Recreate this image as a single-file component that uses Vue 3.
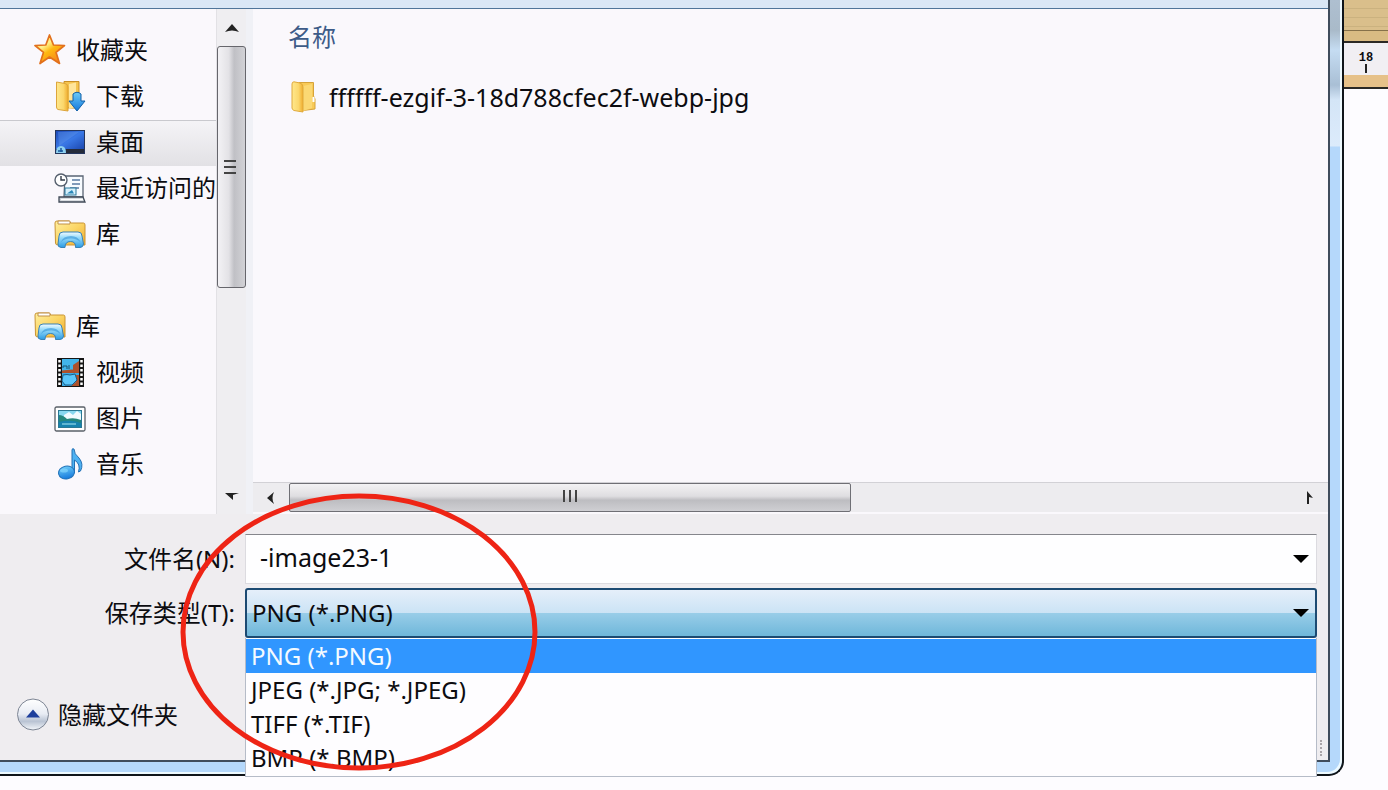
<script setup>
import { ref } from 'vue'

const navItems = [
  { id: 'fav', label: '收藏夹', icon: 'star', root: true },
  { id: 'down', label: '下载', icon: 'download' },
  { id: 'desk', label: '桌面', icon: 'desktop' },
  { id: 'recent', label: '最近访问的', icon: 'recent' },
  { id: 'favlib', label: '库', icon: 'library' },
  { id: 'gap', spacer: true },
  { id: 'lib', label: '库', icon: 'library', root: true },
  { id: 'video', label: '视频', icon: 'video' },
  { id: 'pic', label: '图片', icon: 'picture' },
  { id: 'music', label: '音乐', icon: 'music' },
]
const selected = ref('desk')
const fileName = ref('-image23-1')
const types = ['PNG (*.PNG)', 'JPEG (*.JPG; *.JPEG)', 'TIFF (*.TIF)', 'BMP (*.BMP)']
const fileType = ref(types[0])
</script>

<template>
  <div class="screen">
    <svg class="defs" width="0" height="0" aria-hidden="true">
      <defs>
        <linearGradient id="gStar" x1="0" y1="0" x2="0.7" y2="1"><stop offset="0" stop-color="#ffe030" /><stop offset="0.4" stop-color="#fff08a" /><stop offset="0.6" stop-color="#ffb810" /><stop offset="1" stop-color="#f5821c" /></linearGradient>
        <linearGradient id="gFolder" x1="0" y1="0" x2="1" y2="1"><stop offset="0" stop-color="#fff0a0" /><stop offset="0.5" stop-color="#fbd565" /><stop offset="1" stop-color="#eea92c" /></linearGradient>
        <linearGradient id="gSpine" x1="0" y1="0" x2="1" y2="0"><stop offset="0" stop-color="#ffe88c" /><stop offset="0.6" stop-color="#fbd76c" /><stop offset="1" stop-color="#f0ac2c" /></linearGradient>
        <linearGradient id="gBlue" x1="0" y1="0" x2="0" y2="1"><stop offset="0" stop-color="#6ccbf8" /><stop offset="1" stop-color="#1478dc" /></linearGradient>
        <linearGradient id="gDesk" x1="0" y1="0" x2="1" y2="1"><stop offset="0" stop-color="#1d4bb8" /><stop offset="0.5" stop-color="#3a78e6" /><stop offset="1" stop-color="#1c48b0" /></linearGradient>
        <linearGradient id="gStand" x1="0" y1="0" x2="0" y2="1"><stop offset="0" stop-color="#f2fbff" /><stop offset="0.35" stop-color="#9adcfa" /><stop offset="1" stop-color="#2a9be4" /></linearGradient>
        <linearGradient id="gOrb" x1="0" y1="0" x2="0" y2="1"><stop offset="0" stop-color="#ffffff" /><stop offset="0.48" stop-color="#e8ecf4" /><stop offset="0.72" stop-color="#b9c3d3" /><stop offset="1" stop-color="#f4f7fb" /></linearGradient>
      </defs>
    </svg>

    <main class="dialog">
      <div class="body">
        <div class="panes">
          <nav class="tree">
            <template v-for="item in navItems" :key="item.id">
              <div v-if="item.spacer" class="node"></div>
              <button v-else type="button" class="node" :class="{ root: item.root, active: selected === item.id }" @click="selected = item.id">
                <svg class="icon" viewBox="0 0 32 32" aria-hidden="true">
                  <path v-if="item.icon === 'star'" d="M15.500 1L19.500 11L30.500 11.500L22 18.300L25.500 29.500L15.500 23L6 29.500L9.500 18.300L1 11.500L11.800 11Z" fill="url(#gStar)" stroke="#e2701c" stroke-width="1.700" stroke-linejoin="round" />
                  <g v-else-if="item.icon === 'download'">
                    <path d="M10 1.500H25V28H10Z" fill="#f5c44f" stroke="#c98f26" />
                    <path d="M15 4L22 2.500V27L15 29Z" fill="#ffe59a" />
                    <path d="M2.500 2L11 3.500Q14 4 14 7V31L4 29.500Q2.500 29 2.500 27Z" fill="url(#gSpine)" stroke="#dda53b" />
                    <path d="M19 14Q23 10.500 27 14V21H31L23 31L15 21H19Z" fill="url(#gBlue)" stroke="#1261a8" />
                  </g>
                  <g v-else-if="item.icon === 'desktop'">
                    <rect x="1" y="4" width="30" height="24" fill="#24355c" />
                    <rect x="2" y="5" width="28" height="18" fill="url(#gDesk)" />
                    <path d="M4 6H25L5 20Z" fill="#6ba0f2" opacity="0.35" />
                    <rect x="12" y="23" width="18" height="4" fill="#242b3a" />
                    <path d="M2 27Q2 20 7 20Q12 20 12 27Z" fill="#8ed1f0" />
                    <path d="M4 25H9M7 22V26" stroke="#17569c" stroke-width="1.500" />
                  </g>
                  <g v-else-if="item.icon === 'recent'">
                    <path d="M11 4H29V25H10Z" fill="#f7fbff" stroke="#5a6474" stroke-width="1.300" />
                    <path d="M5 25H29L31 30H5Z" fill="#cdd2d8" stroke="#414b58" stroke-width="1.300" />
                    <path d="M7 27.500H29" stroke="#fff" stroke-width="1.500" />
                    <path d="M18 8H26M18 12H26M16 16H25" stroke="#5a7ba4" stroke-width="1.500" />
                    <rect x="11" y="16" width="11" height="7" fill="#d6f0fb" stroke="#2b789c" />
                    <path d="M13 21.500L18 18L20 21.500Z" fill="#2a87b8" />
                    <circle cx="7" cy="8" r="6" fill="#fff" stroke="#56606e" stroke-width="1.400" />
                    <path d="M7 4V8H11" fill="none" stroke="#333c49" stroke-width="1.400" />
                  </g>
                  <g v-else-if="item.icon === 'library'">
                    <path d="M1 5Q1 3 3 3H15L17 5H29.500Q31 5 31 7V27H4Q1.500 27 1.500 25Z" fill="url(#gFolder)" stroke="#c99434" />
                    <path d="M4 3H16V6H4Z" fill="#fff" stroke="#c09048" />
                    <path d="M5 18Q5 14 9 14H24Q28 14 28 18L29.500 26Q29 29.500 26 29.500H21.500Q22 23.500 16.500 23.500Q11 23.500 11 29.500H7Q3.500 29 4 26Z" fill="url(#gStand)" stroke="#3982b7" />
                    <path d="M7 24Q9 18 17 18Q24 18 26.500 24Q22 20 16.500 20.500Q10 20.500 7 24Z" fill="#1f86cf" opacity="0.5" />
                  </g>
                  <g v-else-if="item.icon === 'video'">
                    <rect x="3" y="2" width="27" height="29" fill="#151515" />
                    <rect x="8" y="3" width="17" height="12" fill="#42b5ea" />
                    <rect x="8" y="17" width="17" height="13" fill="#3aabe6" />
                    <path d="M19 9L25 5V15H19ZM8 14.500L18 13.500L25 15V17H8ZM22 19H25V30H17L22 26Z" fill="#ad512b" />
                    <path d="M9 12V10H13V13M15 9V13" stroke="#18526e" fill="none" />
                    <path d="M9 19L13 18.500L16 19L21 18L23 24L18 29H11L8 25Z" fill="#59c6fa" stroke="#1b5d86" />
                    <path d="M5.500 4V31M27.500 4V31" stroke="#fff" stroke-width="2.500" stroke-dasharray="2.500 2" />
                  </g>
                  <g v-else-if="item.icon === 'picture'">
                    <rect x="1" y="5" width="30" height="24" rx="1.500" fill="#fff" stroke="#5a6068" stroke-width="1.300" />
                    <rect x="4.500" y="8.500" width="23" height="17" fill="#87d7f0" stroke="#2a7894" />
                    <path d="M10 13L15 10L19 13L23 9L27 12V19H10Z" fill="#effaff" />
                    <path d="M5 13Q9 13 13 17Q20 15 27 18V22H5Z" fill="#25877e" />
                    <path d="M5 20Q16 17 27 21V25H5Z" fill="#1683ae" />
                    <path d="M8 22H22" stroke="#a8e9f5" />
                  </g>
                  <g v-else>
                    <path d="M18 25V2Q18 0 20 1Q20 6 25 10Q30 16 26.500 23L24.500 24Q27 16 20.500 12V25Z" fill="#4eb2f2" stroke="#2270b4" />
                    <ellipse cx="12.500" cy="24.500" rx="8" ry="6.500" fill="url(#gBlue)" stroke="#2272b8" transform="rotate(-12 12.500 24.500)" />
                    <ellipse cx="10" cy="22.500" rx="4" ry="2" fill="#8cdcff" opacity="0.6" />
                  </g>
                </svg>
                <span>{{ item.label }}</span>
              </button>
            </template>
          </nav>

          <div class="vbar">
            <button type="button" class="vstep" aria-label="Scroll up"><svg width="14" height="8" viewBox="0 0 14 8"><path d="M7 0L14 8Q7 5 0 8Z" fill="#222" /></svg></button>
            <div class="vthumb"><i></i><i></i><i></i></div>
            <button type="button" class="vstep last" aria-label="Scroll down"><svg width="14" height="8" viewBox="0 0 14 8"><path d="M0 1H14L8 3V8Z" fill="#222" /></svg></button>
          </div>

          <section class="files">
            <div class="listing">
              <div class="heading">名称</div>
              <button type="button" class="file">
                <svg class="icon" viewBox="0 0 32 32" aria-hidden="true">
                  <path d="M11 1.500H25.500V15L27 18V28L11 30Z" fill="#f8ca58" stroke="#d6a33a" />
                  <path d="M15 5L24 3V27L15 30Z" fill="#fbd873" />
                  <path d="M4 3Q4 .8 6 .8L12 2Q15 3 15 6V31L6 29.500Q4 28.500 4 27Z" fill="url(#gSpine)" stroke="#e0aa3c" />
                  <path d="M25.500 16V21" stroke="#fff" stroke-width="2" />
                </svg>
                <span>ffffff-ezgif-3-18d788cfec2f-webp-jpg</span>
              </button>
            </div>
            <div class="hbar">
              <button type="button" class="hstep" aria-label="Scroll left"><svg width="8" height="14" viewBox="0 0 8 14"><path d="M7 1Q4 7 7 13L0 7Z" fill="#222" /></svg></button>
              <div class="htrack"><div class="hthumb"><i></i><i></i><i></i></div></div>
              <button type="button" class="hstep" aria-label="Scroll right"><svg width="8" height="14" viewBox="0 0 8 14"><path d="M1 0L7 7L3 6V13H1Z" fill="#222" /></svg></button>
            </div>
          </section>
        </div>

        <form class="footer" @submit.prevent>
          <label for="name">文件名(N):</label>
          <div class="field">
            <input id="name" v-model="fileName" type="text" autocomplete="off" spellcheck="false" />
            <button type="button" class="drop" aria-label="File name history"><svg width="16" height="8" viewBox="0 0 16 8"><path d="M0 0H16L8 8Z" /></svg></button>
          </div>
          <label for="type">保存类型(T):</label>
          <div class="field combo">
            <select id="type" v-model="fileType">
              <option v-for="t in types" :key="t">{{ t }}</option>
            </select>
            <svg class="caret" width="16" height="8" viewBox="0 0 16 8" aria-hidden="true"><path d="M0 0H16L8 8Z" /></svg>
            <ul class="menu" role="listbox">
              <li v-for="t in types" :key="t" role="option" :aria-selected="t === fileType" :class="{ on: t === fileType }" @click="fileType = t">{{ t }}</li>
            </ul>
          </div>
          <button type="button" class="hide">
            <svg width="34" height="34" viewBox="0 0 34 34" aria-hidden="true">
              <circle cx="17" cy="16.500" r="15.500" fill="url(#gOrb)" stroke="#7d8594" />
              <path d="M17 11.500L24 19.500H10Z" fill="#1e3f9c" />
            </svg>
            <span>隐藏文件夹</span>
          </button>
          <span class="grip"></span>
        </form>
      </div>
    </main>

    <aside class="behind">
      <div class="wood"></div>
      <div class="ledge"></div>
      <div class="ruler"><span>18</span><i></i></div>
      <div class="ledge low"></div>
    </aside>

    <svg class="mark" viewBox="0 0 360 280" aria-hidden="true"><ellipse cx="179" cy="140" rx="176" ry="136" fill="none" stroke="#ee2415" stroke-width="5" /></svg>
  </div>
</template>

<style>
body { margin: 0; background: #fdfcff; }
</style>

<style scoped>
* { box-sizing: border-box; }
.screen {
  position: relative;
  display: flex;
  align-items: flex-start;
  min-height: 100vh;
  overflow: hidden;
  background: #fdfcff;
  color: #0c0c10;
  font: 24px/34px "Noto Sans", "Noto Sans CJK SC", sans-serif;
}
.defs { position: absolute; }
button, input, select { font: inherit; color: inherit; margin: 0; padding: 0; border: 0; background: none; text-align: left; }
svg { display: block; flex: none; }

.dialog {
  flex: 1;
  min-width: 0;
  padding: 0 12px 12px 0;
  border: solid #10151a;
  border-width: 0 2px 2px 0;
  border-radius: 0 0 15px 0;
  background: linear-gradient(#aebfd0 0, #a9bac9 30px, #c5dcf2 50px, #a9bfd5 85px, #d4e5f7 100px, #dcebfb 146px, #b5d8fb 147px);
  box-shadow: inset -2px -2px #eefaff;
}
.body { border: solid #3f4c5c; border-width: 0 2px 2px 0; background: #efedf0; }
.panes { display: flex; border-top: 1px solid #50759a; background: #faf8fc; }
.body::before { content: ""; display: block; height: 8px; background: #dae7f6; }

.tree { width: 216px; height: 505px; flex: none; padding-top: 19px; overflow: hidden; }
.node { display: flex; align-items: center; gap: 10px; width: 100%; height: 46px; padding: 0 0 2px 54px; white-space: nowrap; }
.node.root { padding-left: 34px; }
.node.active { box-shadow: inset 0 1px #c9c9ce; background: linear-gradient(#f5f4f7, #e2e1e5); }
.icon { width: 32px; height: 32px; }

.vbar { display: flex; flex-direction: column; width: 30px; flex: none; background: #efeef1; border-left: 1px solid #e2e1e5; }
.vstep { display: grid; place-items: center; height: 37px; }
.last { margin-top: auto; }
.vthumb { display: flex; flex-direction: column; align-items: center; justify-content: center; gap: 4px; height: 242px; padding-right: 3px; border: 1px solid #66666c; border-radius: 3px; background: linear-gradient(90deg, #f3f2f5, #e3e2e6 40%, #c0c0c5 60%, #d2d2d6); }
.vthumb i { width: 12px; height: 2px; background: #444; }

.files { display: flex; flex-direction: column; flex: 1; min-width: 0; border-left: 7px solid #f0f1f6; padding-bottom: 2px; }
.listing { flex: 1; padding: 11px 0 0 35px; }
.heading { color: #3d5b88; }
.file { display: flex; align-items: center; gap: 9px; margin-top: 26px; font-size: 25px; }
.hbar { display: flex; height: 30px; background: #edecef; border-top: 1px solid #d2d1d6; }
.hstep { display: grid; place-items: center; width: 36px; flex: none; }
.htrack { flex: 1; }
.hthumb { display: flex; align-items: center; justify-content: center; gap: 4px; width: 56%; height: 29px; padding-bottom: 3px; border: 1px solid #6f6f75; border-radius: 2px; background: linear-gradient(#f3f2f4, #dfdee1 45%, #bdbdc1 60%, #cfcfd3); }
.hthumb i { width: 2px; height: 12px; background: #444; }

.footer { position: relative; display: grid; grid-template-columns: 235px 1fr; column-gap: 10px; row-gap: 4px; padding: 20px 11px 28px 0; }
.footer label { align-self: center; text-align: right; white-space: nowrap; }
.field { position: relative; display: flex; align-items: center; height: 50px; border: 1px solid #dcdbe0; border-top-color: #85868c; background: #fefeff; }
.field input { flex: 1; min-width: 0; height: 100%; padding: 0 14px 4px; outline: 0; font-size: 25px; }
.drop { display: grid; place-items: center; width: 30px; height: 100%; }
.combo { border: 2px solid #1c4a72; border-radius: 3px; background: linear-gradient(#e5effa, #cbe3f5 50%, #98cde8 51%, #6fb7da); }
.combo select { flex: 1; width: 100%; height: 100%; padding-left: 5px; appearance: none; outline: 0; }
.caret { position: absolute; right: 6px; pointer-events: none; }
.menu { position: absolute; z-index: 2; top: 48px; left: -2px; right: -2px; margin: 0; padding: 1px 0; list-style: none; background: #fefdff; border: 1px solid #b6bcc8; border-top: 0; }
.menu li { padding-left: 5px; }
.menu .on { background: #3096ff; color: #f4faff; }
.hide { grid-column: 1 / -1; display: flex; align-items: center; justify-self: start; gap: 8px; margin: 56px 0 0 16px; }
.grip { position: absolute; right: 6px; bottom: 4px; height: 16px; border-left: 2px dotted #aaa5a9; }

.behind { width: 44px; flex: none; }
.wood { height: 31px; background: repeating-linear-gradient(#dabf8b 0 8px, #cbb27f 8px 9px); border-bottom: 1px solid #86714a; }
.ledge { height: 12px; background: #d9bb83; border-bottom: 2px solid #2b2925; }
.ruler { display: flex; flex-direction: column; align-items: center; height: 32px; padding-top: 9px; background: #f1eff3; font: bold 12px/12px "Liberation Mono", monospace; }
.ruler i { width: 2px; height: 9px; background: #222; }
.low { height: 14px; background: #e6c189; }

.mark { position: absolute; z-index: 3; left: 180px; top: 492px; width: 360px; height: 280px; pointer-events: none; }
</style>
